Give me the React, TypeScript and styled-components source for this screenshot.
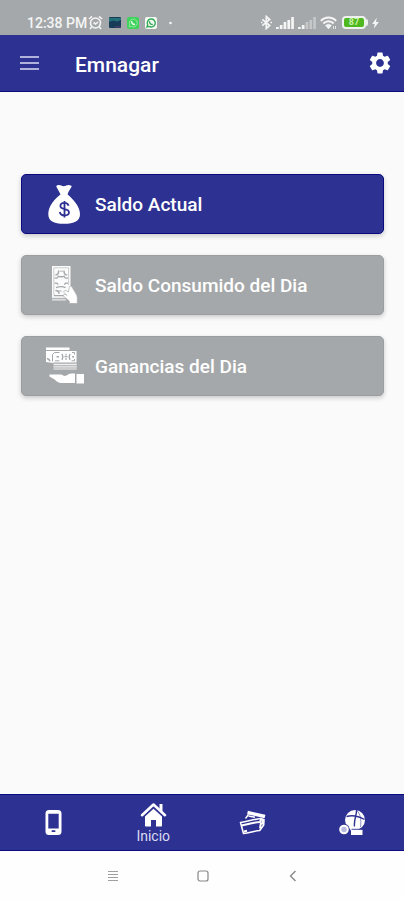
import React from "react";
import styled, { createGlobalStyle } from "styled-components";
import { MdSettings } from "react-icons/md";

const BLUE = "#2d3192";
const EDGE = "#0b0b80";
const GREY = "#a5a8aa";

const GlobalStyle = createGlobalStyle`
  *, *::before, *::after { box-sizing: border-box; }
  body { margin: 0; font-family: Roboto, "Liberation Sans", sans-serif; background: #fafafa; }
  button { font: inherit; border: 0; background: none; padding: 0; cursor: pointer; }
  svg { display: block; flex: none; }
`;

const Screen = styled.div`
  display: flex;
  flex-direction: column;
  min-height: 100vh;
  background: #fafafa;
`;

const StatusBar = styled.div`
  display: flex;
  align-items: center;
  justify-content: space-between;
  height: 35px;
  padding: 10px 25px 0 27px;
  background: ${GREY};
  color: #f4f5f5;
`;

const StatusGroup = styled.div<{ $gap: number }>`
  display: flex;
  align-items: center;
  gap: ${(p) => p.$gap}px;
`;

const Clock = styled.span`
  font-size: 14px;
  line-height: 16px;
  font-weight: 500;
  margin-right: -5px;
`;

const Battery = styled.span`
  position: relative;
  display: flex;
  align-items: center;
  justify-content: center;
  width: 24px;
  height: 13px;
  margin-left: 1px;
  margin-right: 2px;
  border: 2px solid #eef2ee;
  border-radius: 4px;
  background: #4fb81f;
  color: #c9f0a8;
  font-size: 9px;
  line-height: 9px;
  font-weight: 700;

  &::after {
    content: "";
    position: absolute;
    right: -4px;
    top: 1px;
    width: 2px;
    height: 7px;
    border-radius: 0 2px 2px 0;
    background: #eef2ee;
  }
`;

const AppBar = styled.header`
  display: flex;
  align-items: center;
  height: 57px;
  padding: 0 11px 0 19px;
  background: ${BLUE};
  border-bottom: 1px solid ${EDGE};
  color: #fff;
`;

const Title = styled.h1`
  flex: 1;
  margin: 0 0 0 35px;
  font-size: 21px;
  line-height: 24px;
  font-weight: 500;
  padding-top: 3px;
`;

const BarButton = styled.button`
  display: flex;
  color: #fff;
`;

const Main = styled.main`
  flex: 1;
  display: flex;
  flex-direction: column;
  gap: 21px;
  padding: 82px 20px 24px 21px;
`;

const Card = styled.button<{ $active?: boolean }>`
  display: flex;
  align-items: center;
  height: 60px;
  padding: 0 23px;
  gap: 11px;
  border: 1px solid ${(p) => (p.$active ? EDGE : "#9a9ea0")};
  border-radius: 5px;
  background: ${(p) => (p.$active ? BLUE : GREY)};
  box-shadow: 0 2px 5px rgba(0, 0, 0, 0.2);
  color: #fff;
  font-size: 19px;
  line-height: 24px;
  font-weight: 500;
  text-align: left;
`;

const CardLabel = styled.span`
  padding-top: 2px;
`;

const BottomNav = styled.nav`
  display: flex;
  height: 57px;
  padding: 0 2px 0 4px;
  background: ${BLUE};
  border: solid ${EDGE};
  border-width: 1px 0;
`;

const Tab = styled.button`
  flex: 1;
  display: flex;
  flex-direction: column;
  align-items: center;
  justify-content: center;
  color: #fff;
  font-size: 14px;
  line-height: 16px;
`;

const TabLabel = styled.span`
  color: #dadbf0;
`;

const SystemNav = styled.nav`
  display: flex;
  justify-content: center;
  align-items: center;
  gap: 70px;
  height: 49px;
  padding-left: 2px;
  background: #fefefe;
`;

const SystemButton = styled.button`
  display: flex;
  justify-content: center;
  width: 20px;
`;

const AlarmIcon = () => (
  <svg width="15" height="15" viewBox="0 0 15 15" fill="none" stroke="#f4f5f5" strokeWidth="1.6" aria-hidden="true">
    <circle cx="7.500" cy="8" r="5" />
    <path d="M1 4 4 1.300M14 4 11 1.300M3.500 12 2 14M11.500 12 13 14M5.500 7.500 7.500 9 10 7" />
  </svg>
);

const PhotoIcon = () => (
  <svg width="12" height="12" viewBox="0 0 12 12" aria-hidden="true">
    <rect width="12" height="11" rx="1" fill="#173c58" />
    <path d="M0 1h12v2L8 4.500 4 3.500 0 5z" fill="#237078" />
    <path d="M6 9h6v1.500H6z" fill="#453d69" />
  </svg>
);

const ChatIcon = () => (
  <svg width="12" height="12" viewBox="0 0 12 12" fill="none" aria-hidden="true">
    <rect width="12" height="12" rx="2" fill="#3dd35b" />
    <path d="M2 10l.7-2.200A4 4 0 1 1 4.200 9.400z" stroke="#8fe89b" />
    <path d="M4.500 4c0 2 1.500 3.500 3.500 3.500" stroke="#e6ffe8" strokeWidth="1.500" />
  </svg>
);

const BusinessIcon = () => (
  <svg width="12" height="12" viewBox="0 0 12 12" fill="none" aria-hidden="true">
    <rect width="12" height="12" rx="2" fill="#f3faf3" />
    <path d="M2 10l.7-2.200A4 4 0 1 1 4.200 9.400z" stroke="#35a956" strokeWidth="1.400" />
    <path d="M4.500 4.200c0 2 1.300 3.300 3.300 3.300" stroke="#35a956" strokeWidth="1.400" />
  </svg>
);

const DotIcon = () => (
  <svg width="12" height="12" viewBox="0 0 12 12" aria-hidden="true">
    <circle cx="7.500" cy="6" r="1.300" fill="#f4f5f5" />
  </svg>
);

const BluetoothIcon = () => (
  <svg width="11" height="15" viewBox="0 0 11 15" fill="none" stroke="#f4f5f5" strokeWidth="1.700" aria-hidden="true">
    <path d="M1.300 4.300 8.700 10.500 5.300 13.500V1.500L8.700 4.500 1.300 10.700" />
    <path d="M0 7.500h1.500M9.500 7.500H11" />
  </svg>
);

const SignalIcon = ({ level }: { level: number }) => (
  <svg width="18" height="12" viewBox="0 0 18 12" aria-hidden="true">
    {[2, 4, 7, 9, 12].map((h, i) => (
      <rect key={h} x={i * 3.8} y={12 - h} width="2.700" height={h} fill="#f4f5f5" opacity={i < level ? 1 : 0.4} />
    ))}
  </svg>
);

const WifiIcon = () => (
  <svg width="17" height="14" viewBox="0 0 17 14" fill="none" stroke="#f4f5f5" aria-hidden="true">
    <path d="M.8 4.800C5 .3 12 .3 16.200 4.800M3.300 7.500c3-3 7.400-3 10.400 0" strokeWidth="1.900" />
    <path d="M5.500 9.500c1.800-1.700 4.200-1.700 6 0L8.500 13z" fill="#f4f5f5" strokeWidth=".5" />
    <path d="M13.500 10v3M15.500 10v3" strokeWidth="1" opacity=".8" />
  </svg>
);

const BoltIcon = () => (
  <svg width="7" height="12" viewBox="0 0 7 12" aria-hidden="true">
    <path d="M4.800.8.2 7h2.500L2 11.500 6.800 5H4z" fill="#f4f5f5" />
  </svg>
);

const MenuIcon = () => (
  <svg width="21" height="16" viewBox="0 0 21 16" stroke="#dcddf4" strokeWidth="1.700" aria-hidden="true">
    <path d="M1 2h19M1 8h19M1 14h19" />
  </svg>
);

const MoneyBagIcon = () => (
  <svg width="39" height="42" viewBox="0 0 39 42" aria-hidden="true">
    <path
      fill="#fff"
      d="M12 2.500c3-1.300 4.200.7 6.800.7 2.500 0 4-2.200 7.500-.4.5.3.400.8.1 1.300L23.400 9l-.8 2.500c5.500 4.500 12.400 12 12.400 19.500 0 7-5.500 9.800-16 9.800S3.300 38 3.300 31c0-7.500 6.400-15.500 12.200-19.500L14.300 9 11.500 4c-.4-.6-.2-1.200.5-1.500z"
    />
    <path
      d="M23.600 22.700c-.5-2-2-2.900-4.100-2.900-2.400 0-4.100 1.200-4.100 3.100 0 4.300 8.600 2 8.600 6.300 0 2-1.900 3.200-4.500 3.200-2.500 0-4.300-1.200-4.700-3.400M19.500 18v16.500"
      fill="none"
      stroke={BLUE}
      strokeWidth="1.800"
    />
  </svg>
);

const PayNoteIcon = () => (
  <svg width="39" height="42" viewBox="0 0 39 42" aria-hidden="true">
    <path fill="#fff" fillOpacity=".95" d="M7 2h18.500v31H7z" />
    <path fill="#fff" fillOpacity=".75" d="M7 33h13v1.200H7zM7 35.200h14v1.300H7z" />
    <g fill="none" stroke={GREY} strokeWidth=".9">
      <path d="M8.800 31.500V3.800h14.800V21" opacity=".6" />
      <path d="M10.300 11.200c2.500-.5 3.500-2.200 3.200-4.700M22.300 11.200c-2.500-.5-3.500-2.200-3.200-4.700" strokeWidth="1.300" />
      <path d="M12.500 11.800c2.500 1.300 5 1.300 7.500 0" strokeWidth="1.400" />
      <path d="M9.500 14.200h2.300l1.500-1M9.500 19.200h2.300l1.500 1.200M23 14.200h-2.300l-1.500-1M23 19.200h-2.300l-1.500 1.200" strokeWidth="1.300" />
      <path d="M11 23.700c3-1.200 7-1.200 9.500 0M10.500 26.500c2.600 0 3.500 1.300 3.500 3.500" strokeWidth="1.300" />
      <path d="M13.500 27h3M9 31.700h11" strokeWidth="1.200" />
      <path d="M14.500 7.200h4" strokeWidth=".8" />
    </g>
    <path
      fill="#fff"
      stroke={GREY}
      strokeWidth=".7"
      d="M19.500 29c-1.500-1.500-.3-3 1.500-2.300l2.500 1.300.7-4.500c.3-1.800 2-2 2.800-.4l4.200 7c.8 1.300 1.100 2.300 1.100 4V39.500h-8V37l-5-4c-1.800-1.600-.5-3.200 1-2.500l1.500.8z"
    />
  </svg>
);

const EarningsIcon = () => (
  <svg width="39" height="42" viewBox="0 0 39 42" aria-hidden="true">
    <g fill="#fff">
      <path d="M1 2.500h23.500V5H1zM1 6h30.500v11.500H8.500v.5L1 17z" />
      <path d="M8.500 18.700h23.300v1.500H8.500zM8.500 21.200h23.300v1.300H8.500zM8.500 23.500h23.300v1H8.500z" opacity=".85" />
      <path d="M4.500 29.500h11c1.700 0 2.700.8 3.500 1.500l2.500-.4c1.700-1.400 3-2.100 5-2.100H30v9.500H16c-2.200 0-4.500-1.300-6.300-3.400L4.500 31.500z" />
      <path d="M31.500 29H39v9.500h-7.500z" />
    </g>
    <g fill="none" stroke={GREY}>
      <path d="M7.500 16.500V9.500l2-2h5M27 7.500h2.500v2M10 15.800h4.500M26.500 15.800h3V14" strokeWidth="1" />
      <path d="M2 13.500c1.500.3 2.500 1.200 3 2.800M11.500 11.700h2.500M27 11.700h2" strokeWidth="1.600" />
      <path d="M17 8.800c1 1.800 1 4.200 0 6M25 8.800c-1 1.800-1 4.200 0 6" strokeWidth="1.400" />
      <path d="M21 8.800v1.700M21 13v2M19.500 11.700h3" strokeWidth="1.200" />
    </g>
  </svg>
);

const PhoneIcon = () => (
  <svg width="17" height="25" viewBox="0 0 17 25" aria-hidden="true">
    <path fill="#fff" fillRule="evenodd" d="M4 0h9a3.500 3.500 0 0 1 3.500 3.500v18A3.500 3.500 0 0 1 13 25H4A3.500 3.500 0 0 1 .5 21.500v-18A3.500 3.500 0 0 1 4 0zM3.300 3.700v14.800h10.400V3.700z" />
    <rect x="6.500" y="20.300" width="4" height="1.700" rx=".8" fill={BLUE} />
  </svg>
);

const HomeIcon = () => (
  <svg width="27" height="26" viewBox="0 0 27 26" aria-hidden="true">
    <path d="M2 13.200 13.500 2.500 25 13.200" fill="none" stroke="#fff" strokeWidth="2.600" strokeLinecap="round" strokeLinejoin="round" />
    <path d="M19.500 2h3v8l-3-3z" fill="#fff" />
    <path d="M13.500 6.800 22 14.500v9c0 .6-.4 1-1 1h-5V18h-5v6.500H6c-.6 0-1-.4-1-1v-9z" fill="#fff" />
  </svg>
);

const CardsIcon = () => (
  <svg width="27" height="26" viewBox="0 0 27 26" fill="none" aria-hidden="true">
    <path d="m6.500 8.500 3-4" stroke="#fff" strokeWidth="1.400" />
    <path d="m8.500 2.500 17.500 4" stroke="#fff" strokeWidth="3.400" />
    <path d="m9.500 6 6.500 1.300" stroke="#fff" strokeWidth="1.500" />
    <path d="M1.500 12.500c8-1.200 13-3.300 20.500-4l3 1.200-.3 5.300-4 5.500c-6 .5-10.500 2.700-16.200 3z" stroke="#fff" strokeWidth="1.600" strokeLinejoin="round" />
    <path d="M2.500 15.500c7-1 11.500-3.200 18.500-3.500l1.300-3" stroke="#fff" strokeWidth="2" />
    <path d="m5 21.500 3-.7M22 12.500l-1 6M23.500 10v4.500" stroke="#fff" strokeWidth="2" />
  </svg>
);

const GlobeIcon = () => (
  <svg width="27" height="26" viewBox="0 0 27 26" aria-hidden="true">
    <circle cx="16" cy="10" r="10" fill="#fff" />
    <path d="M17.500 0c.5 5-3 9-2 18M7.500 6.500c5-1.500 12-.5 18 3" fill="none" stroke={BLUE} strokeWidth="1.400" />
    <path d="M18 .5c3.500 4 4.500 9 3.500 16.500" fill="none" stroke={BLUE} strokeWidth=".8" opacity=".7" />
    <circle cx="5" cy="19.500" r="5.700" fill={BLUE} />
    <circle cx="5" cy="19.500" r="3.800" fill="#b9bae0" stroke="#fff" strokeWidth="2" />
    <path d="M10 17.500 13.500 16l6 1.500v3l-7 1z" fill="#fff" />
    <path d="M12 19.500h11.500V25H12z" fill="#fff" />
    <path d="M12.500 19.300h12" stroke={BLUE} strokeWidth=".9" />
  </svg>
);

const cards = [
  { label: "Saldo Actual", Icon: MoneyBagIcon, active: true },
  { label: "Saldo Consumido del Dia", Icon: PayNoteIcon },
  { label: "Ganancias del Dia", Icon: EarningsIcon },
];

const tabs = [
  { name: "Recargas", Icon: PhoneIcon },
  { name: "Inicio", Icon: HomeIcon, current: true },
  { name: "Pagos", Icon: CardsIcon },
  { name: "Internacional", Icon: GlobeIcon },
];

export default function App() {
  return (
    <>
      <GlobalStyle />
      <Screen>
        <StatusBar>
          <StatusGroup $gap={6}>
            <Clock>12:38 PM</Clock>
            <AlarmIcon />
            <PhotoIcon />
            <ChatIcon />
            <BusinessIcon />
            <DotIcon />
          </StatusGroup>
          <StatusGroup $gap={4}>
            <BluetoothIcon />
            <SignalIcon level={5} />
            <SignalIcon level={2} />
            <WifiIcon />
            <Battery>87</Battery>
            <BoltIcon />
          </StatusGroup>
        </StatusBar>
        <AppBar>
          <BarButton aria-label="Menú">
            <MenuIcon />
          </BarButton>
          <Title>Emnagar</Title>
          <BarButton aria-label="Configuración">
            <MdSettings size={26} />
          </BarButton>
        </AppBar>
        <Main>
          {cards.map(({ label, Icon, active }) => (
            <Card key={label} $active={active}>
              <Icon />
              <CardLabel>{label}</CardLabel>
            </Card>
          ))}
        </Main>
        <BottomNav>
          {tabs.map(({ name, Icon, current }) => (
            <Tab key={name} aria-label={name} aria-current={current ? "page" : undefined}>
              <Icon />
              {current && <TabLabel>{name}</TabLabel>}
            </Tab>
          ))}
        </BottomNav>
        <SystemNav>
          <SystemButton aria-label="Recientes">
            <svg width="12" height="12" viewBox="0 0 12 12" stroke="#a0a0a0" strokeWidth="1.200">
              <path d="M1 1.500h10M1 4.500h10M1 7.500h10M1 10.500h10" />
            </svg>
          </SystemButton>
          <SystemButton aria-label="Pantalla de inicio">
            <svg width="12" height="12" viewBox="0 0 12 12" fill="none" stroke="#858585" strokeWidth="1.200">
              <rect x="1" y="1" width="10" height="10" rx="2" />
            </svg>
          </SystemButton>
          <SystemButton aria-label="Atrás">
            <svg width="12" height="12" viewBox="0 0 12 12" fill="none" stroke="#858585" strokeWidth="1.300">
              <path d="M8.500 1 3.500 6l5 5" />
            </svg>
          </SystemButton>
        </SystemNav>
      </Screen>
    </>
  );
}
